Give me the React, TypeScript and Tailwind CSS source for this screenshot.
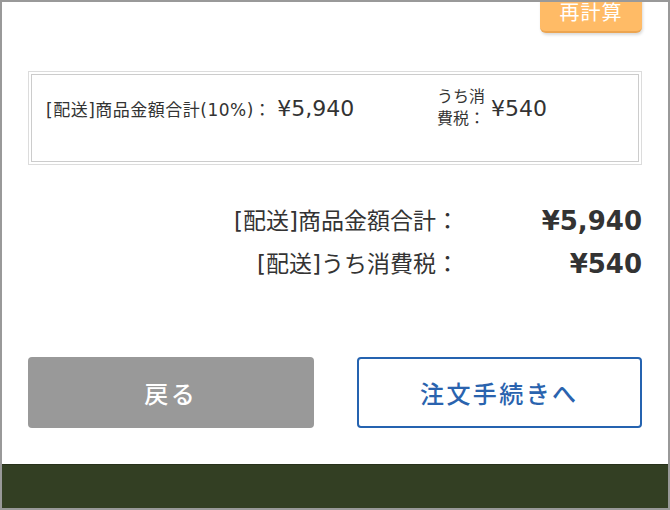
export default function App() {
  return (
    <div className="w-[670px] h-[510px] border-2 border-[#999] bg-white flex flex-col overflow-hidden font-['DejaVu_Sans','Noto_Sans_CJK_JP',sans-serif] text-[#333]">
      <main className="flex-1 px-[26px]">
        <div className="flex justify-end">
          <button className="-mt-[12px] h-[43px] w-[102px] rounded-b-[6px] bg-[#ffbb66] border-b-2 border-[#eca551] shadow-[1px_2px_3px_rgba(0,0,0,0.15)] text-white text-[20px] leading-none tracking-[1px] pt-[2px] font-['Noto_Sans_CJK_JP',sans-serif]">
            再計算
          </button>
        </div>

        <div className="mt-[38px] border border-[#dcdcdc] p-[2px]">
          <div className="h-[88px] border border-[#ccc] grid grid-cols-[391px_1fr] items-center pl-[14px] pb-[20px]">
            <div className="flex items-baseline">
              <span className="text-[17px] tracking-[0.5px]">[配送]商品金額合計(10%)：</span>
              <span className="text-[22px] ml-[6px]">¥5,940</span>
            </div>
            <div className="flex items-center">
              <span className="w-[50px] text-[16px] leading-[22px]">うち消費税：</span>
              <span className="text-[22px] ml-[4px]">¥540</span>
            </div>
          </div>
        </div>

        <div className="mt-[35px]">
          <div className="h-[43px] flex items-center justify-end">
            <span className="text-[23px]">[配送]商品金額合計：</span>
            <span className="w-[183px] text-right text-[26px] font-bold">¥5,940</span>
          </div>
          <div className="h-[43px] flex items-center justify-end">
            <span className="text-[23px]">[配送]うち消費税：</span>
            <span className="w-[183px] text-right text-[26px] font-bold">¥540</span>
          </div>
        </div>

        <div className="mt-[71px] grid grid-cols-2 gap-[43px] font-['Noto_Sans_CJK_JP',sans-serif]">
          <button className="h-[71px] rounded-[4px] bg-[#999] text-white text-[24px] font-medium tracking-[0.1em]">
            戻る
          </button>
          <button className="h-[71px] rounded-[4px] border-2 border-[#2563b0] bg-white text-[#2a63ae] text-[24px] font-medium tracking-[0.1em]">
            注文手続きへ
          </button>
        </div>
      </main>
      <footer className="h-[44px] bg-[#333f23] border-t border-[#27311a]" />
    </div>
  );
}
